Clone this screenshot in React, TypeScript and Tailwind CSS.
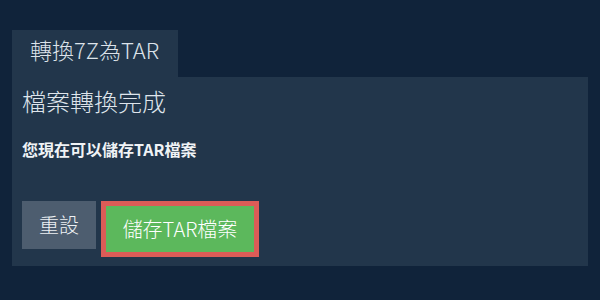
import React from "react";

export default function App() {
  return (
    <div
      className="w-[600px] h-[300px] bg-[#10233a] pt-[30px] px-[12px]"
      style={{ fontFamily: '"Noto Sans CJK TC", "Noto Sans", sans-serif' }}
    >
      <div className="flex">
        <div className="bg-[#22364b] w-[166px] h-[47px] pl-[18px] pt-[4px] text-[22px] leading-[30px] font-light text-[#dde3ea] whitespace-nowrap">
          轉換7Z為TAR
        </div>
      </div>
      <div className="bg-[#22364b] h-[189px] pl-[10px] pt-[8px] flex flex-col">
        <div className="text-[24px] leading-[32px] font-light text-[#dfe5ec]">檔案轉換完成</div>
        <div className="mt-[20px] text-[16px] leading-[24px] font-bold text-[#f0f3f6]">您現在可以儲存TAR檔案</div>
        <div className="mt-[40px] flex items-start gap-[5px]">
          <button className="w-[74px] h-[48px] bg-[#4d5d6f] text-[#eef1f4] text-[20px] leading-[26px] font-light flex items-center justify-center">
            重設
          </button>
          <button className="h-[56px] w-[158px] border-[5px] border-[#dc5c57] bg-[#5cb85c] text-white text-[20px] leading-[26px] font-light flex items-center justify-center">
            儲存TAR檔案
          </button>
        </div>
      </div>
    </div>
  );
}
